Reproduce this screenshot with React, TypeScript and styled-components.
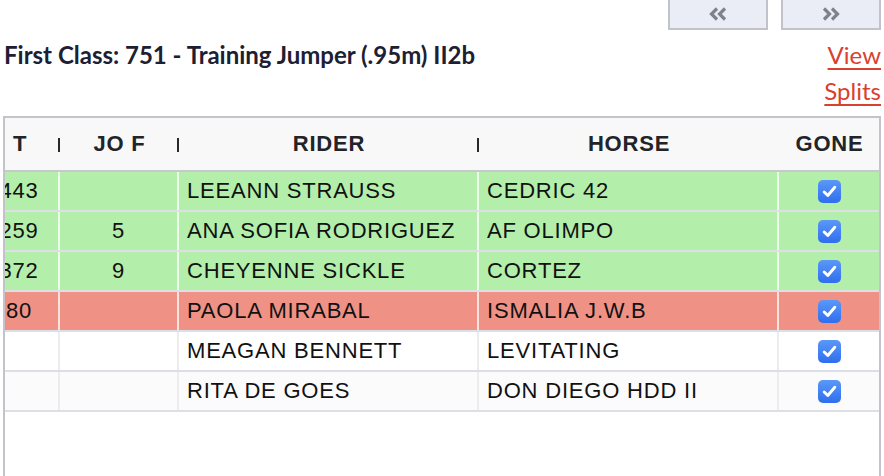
import React, {useLayoutEffect, useRef} from 'react';
import styled, {createGlobalStyle} from 'styled-components';

type Status = 'clear' | 'fault' | 'none';

interface Entry {
    time: string;
    joFaults: string;
    rider: string;
    horse: string;
    gone: boolean;
    status: Status;
}

const entries: Entry[] = [
    {time: '443', joFaults: '', rider: 'LEEANN STRAUSS', horse: 'CEDRIC 42', gone: true, status: 'clear'},
    {time: '259', joFaults: '5', rider: 'ANA SOFIA RODRIGUEZ', horse: 'AF OLIMPO', gone: true, status: 'clear'},
    {time: '372', joFaults: '9', rider: 'CHEYENNE SICKLE', horse: 'CORTEZ', gone: true, status: 'clear'},
    {time: '80', joFaults: '', rider: 'PAOLA MIRABAL', horse: 'ISMALIA J.W.B', gone: true, status: 'fault'},
    {time: '', joFaults: '', rider: 'MEAGAN BENNETT', horse: 'LEVITATING', gone: true, status: 'none'},
    {time: '', joFaults: '', rider: 'RITA DE GOES', horse: 'DON DIEGO HDD II', gone: true, status: 'none'},
];

const GlobalStyle = createGlobalStyle`
    html, body {
        margin: 0;
        padding: 0;
        background: #fff;
        overflow: hidden;
    }
    body {
        font-family: Lato, "Open Sans", sans-serif;
    }
`;

const Chevrons = ({dir}: {dir: 'left' | 'right'}) => (
    <svg width="20" height="14" viewBox="0 0 20 14" fill="none">
        {dir === 'left' ? (
            <>
                <path d="M9 1.5 L3.5 7 L9 12.5" stroke="#7f828b" strokeWidth="3.2" />
                <path d="M17 1.5 L11.5 7 L17 12.5" stroke="#7f828b" strokeWidth="3.2" />
            </>
        ) : (
            <>
                <path d="M3 1.5 L8.5 7 L3 12.5" stroke="#7f828b" strokeWidth="3.2" />
                <path d="M11 1.5 L16.5 7 L11 12.5" stroke="#7f828b" strokeWidth="3.2" />
            </>
        )}
    </svg>
);

const CheckBox = () => (
    <Box>
        <svg width="15" height="13" viewBox="0 0 15 13" fill="none">
            <path d="M2.2 7 L5.8 10.5 L12.8 2.2" stroke="#fff" strokeWidth="2.9" strokeLinecap="round" strokeLinejoin="round" />
        </svg>
    </Box>
);

const App = () => {
    const viewportRef = useRef<HTMLDivElement>(null);

    // the grid is scrolled a little to the right, as in the live page
    useLayoutEffect(() => {
        if (viewportRef.current) viewportRef.current.scrollLeft = 25;
    }, []);

    return (
        <Page>
            <GlobalStyle />
            <Pager>
                <PageButton aria-label="previous"><Chevrons dir="left" /></PageButton>
                <PageButton aria-label="next"><Chevrons dir="right" /></PageButton>
            </Pager>
            <TitleRow>
                <Title>First Class: 751 - Training Jumper (.95m) II2b</Title>
                <SplitsLink href="#">View Splits</SplitsLink>
            </TitleRow>
            <Grid>
                <Viewport ref={viewportRef}>
                    <HeaderRow>
                        <HeaderCell>T<Handle /></HeaderCell>
                        <HeaderCell>JO F<Handle /></HeaderCell>
                        <HeaderCell>RIDER<Handle /></HeaderCell>
                        <HeaderCell>HORSE</HeaderCell>
                        <HeaderCell>GONE</HeaderCell>
                    </HeaderRow>
                    {entries.map((e, i) => (
                        <Row key={e.rider} $status={e.status} $odd={i % 2 === 1}>
                            <Cell $align="center">{e.time}</Cell>
                            <Cell $align="center">{e.joFaults}</Cell>
                            <Cell>{e.rider}</Cell>
                            <Cell>{e.horse}</Cell>
                            <Cell $align="center" $last>{e.gone && <CheckBox />}</Cell>
                        </Row>
                    ))}
                </Viewport>
            </Grid>
        </Page>
    );
};

const Page = styled.div`
    width: 884px;
    height: 476px;
    box-sizing: border-box;
    padding: 0 3px;
    display: flex;
    flex-direction: column;
`;

const Pager = styled.div`
    display: flex;
    justify-content: flex-end;
    gap: 13px;
    margin-top: -8px;
`;

const PageButton = styled.button`
    width: 100px;
    height: 38px;
    box-sizing: border-box;
    padding: 5px 0 0;
    background: #eaedf5;
    border: 2px solid #c1c3c8;
    display: flex;
    align-items: center;
    justify-content: center;
    cursor: pointer;
`;

const TitleRow = styled.div`
    display: flex;
    justify-content: space-between;
    align-items: flex-start;
    margin-top: 7px;
    padding-left: 1px;
`;

const Title = styled.h1`
    margin: 0;
    font-family: Lato, sans-serif;
    font-weight: 700;
    font-size: 24px;
    line-height: 36px;
    color: #1d2033;
`;

const SplitsLink = styled.a`
    width: 60px;
    text-align: right;
    font-family: Lato, sans-serif;
    font-size: 24px;
    line-height: 36px;
    color: #d9402d;
    text-decoration: underline;
    text-decoration-thickness: 2px;
    text-underline-offset: 4px;
`;

const Grid = styled.div`
    margin-top: 7px;
    border: 2px solid #c2c4c9;
    height: 420px;
    flex-shrink: 0;
    background: #fff;
    font-family: "Liberation Sans", Arial, sans-serif;
`;

const Viewport = styled.div`
    overflow: hidden;
    height: 100%;
`;

const columns = '80px 119px 300px 300px 101px';

const HeaderRow = styled.div`
    display: grid;
    grid-template-columns: ${columns};
    width: 900px;
    height: 54px;
    box-sizing: border-box;
    background: #f8f8f8;
    border-bottom: 2px solid #c6c8cc;
`;

const HeaderCell = styled.div`
    position: relative;
    display: flex;
    align-items: center;
    justify-content: center;
    font-weight: 700;
    font-size: 22px;
    letter-spacing: 0.8px;
    color: #222428;
`;

const Handle = styled.span`
    position: absolute;
    right: 0;
    top: 20px;
    width: 2px;
    height: 14px;
    background: #26282c;
`;

const rowColors: Record<Status, string> = {
    clear: '#b3eeab',
    fault: '#f09185',
    none: '#ffffff',
};

const Row = styled.div<{ $status: Status; $odd: boolean }>`
    --sep: ${p => (p.$status === 'none' ? '#ececec' : 'rgba(255, 255, 255, 0.75)')};
    display: grid;
    grid-template-columns: ${columns};
    width: 900px;
    height: 40px;
    box-sizing: border-box;
    border-bottom: 2px solid #dcdfe4;
    background: ${p => (p.$status === 'none' && p.$odd ? '#fbfbfb' : rowColors[p.$status])};
`;

const Cell = styled.div<{ $align?: 'left' | 'center'; $last?: boolean }>`
    display: flex;
    align-items: center;
    justify-content: ${p => (p.$align === 'center' ? 'center' : 'flex-start')};
    padding: 0 8px;
    box-sizing: border-box;
    border-right: ${p => (p.$last ? 'none' : '2px solid var(--sep)')};
    font-size: 22px;
    letter-spacing: 0.8px;
    color: #111;
    white-space: nowrap;
    overflow: hidden;
`;

const Box = styled.span`
    width: 23px;
    height: 23px;
    border-radius: 5px;
    background: linear-gradient(#5a98f8, #2f6eee);
    display: flex;
    align-items: center;
    justify-content: center;
`;

export default App;
